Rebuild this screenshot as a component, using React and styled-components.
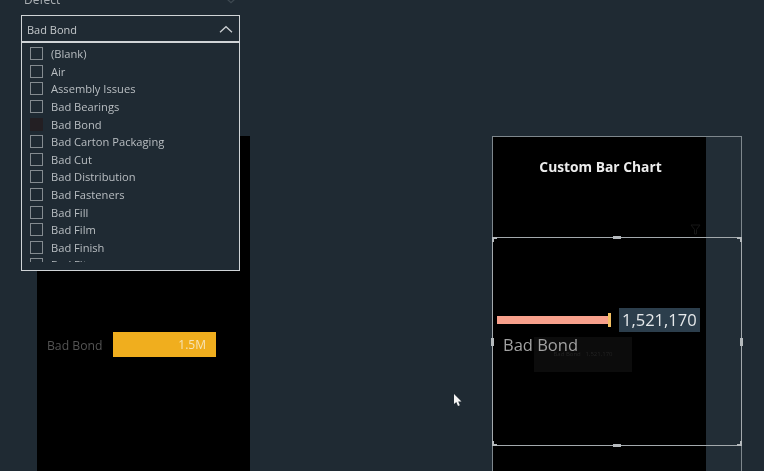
import React from "react";
import styled, { createGlobalStyle } from "styled-components";

const GlobalStyle = createGlobalStyle`
  html, body {
    margin: 0;
    padding: 0;
    background: #1f2a33;
    overflow: hidden;
  }
  body {
    font-family: "Open Sans", "Noto Sans", sans-serif;
  }
`;

const defects = [
  "(Blank)",
  "Air",
  "Assembly Issues",
  "Bad Bearings",
  "Bad Bond",
  "Bad Carton Packaging",
  "Bad Cut",
  "Bad Distribution",
  "Bad Fasteners",
  "Bad Fill",
  "Bad Film",
  "Bad Finish",
  "Bad Fit",
];

const Chevron = ({ up, color, size = 14 }) => (
  <svg width={size} height={size * 0.6} viewBox="0 0 14 8" fill="none">
    <path
      d={up ? "M1 7 L7 1.5 L13 7" : "M1 1 L7 6.5 L13 1"}
      stroke={color}
      strokeWidth="1.3"
    />
  </svg>
);

const Handle = ({ place }) => <SelectionHandle $place={place} />;

const App = () => {
  return (
    <Page>
      <GlobalStyle />
      <SlicerTitle>
        <span>Defect</span>
        <Chevron color="#3d4850" />
      </SlicerTitle>

      <Canvas>
        <LeftPanel>
          <BarRow>
            <BarLabel>Bad Bond</BarLabel>
            <Bar>1.5M</Bar>
          </BarRow>
        </LeftPanel>

        <RightPanel>
          <ChartArea>
            <ChartTitle>Custom Bar Chart</ChartTitle>
            <CustomChart>
              <BarLine>
                <Salmon />
                <EndMark />
                <ValueTag>1,521,170</ValueTag>
              </BarLine>
              <ChartLabel>Bad Bond</ChartLabel>
            </CustomChart>
          </ChartArea>
          <SideStrip />

          <GhostTip>Bad Bond &nbsp; 1,521,170</GhostTip>
          <FilterMark>
            <svg width="11" height="11" viewBox="0 0 11 11" fill="none">
              <path d="M1 1 H10 L6.5 5.5 V10 H4.5 V5.5 Z" stroke="#171717" />
            </svg>
          </FilterMark>
          <SelectionBox>
            {["tl", "tc", "tr", "ml", "mr", "bl", "bc", "br"].map((p) => (
              <Handle key={p} place={p} />
            ))}
          </SelectionBox>
        </RightPanel>
      </Canvas>

      <Dropdown>
        <DropdownHead>
          <span>Bad Bond</span>
          <Chevron up color="#c9cdd0" />
        </DropdownHead>
        <DropdownList>
          {defects.map((d) => (
            <Item key={d}>
              <CheckBox $selected={d === "Bad Bond"} />
              {d}
            </Item>
          ))}
        </DropdownList>
      </Dropdown>

      <Cursor>
        <svg width="10" height="14" viewBox="0 0 10 14">
          <path
            d="M1 1 V11 L3.3 9 L5 13 L6.8 12.2 L5.2 8.6 L8.5 8.4 Z"
            fill="#f4f4f4"
          />
        </svg>
      </Cursor>
    </Page>
  );
};

export default App;

const Page = styled.div`
  position: relative;
  width: 764px;
  height: 471px;
  overflow: hidden;
  background: #1f2a33;
  filter: blur(0.4px);
`;

const SlicerTitle = styled.div`
  position: absolute;
  top: -8px;
  left: 24px;
  width: 214px;
  display: flex;
  justify-content: space-between;
  align-items: center;
  font-size: 12px;
  line-height: 16px;
  color: #a9aeb2;
`;

const Canvas = styled.div`
  display: flex;
  align-items: flex-start;
  padding: 136px 0 0 37px;
  gap: 242px;
`;

const LeftPanel = styled.div`
  width: 213px;
  height: 335px;
  background: #000;
  box-sizing: border-box;
  padding: 196px 34px 0 10px;
`;

const BarRow = styled.div`
  display: flex;
  align-items: flex-start;
  gap: 11px;
`;

const BarLabel = styled.div`
  font-size: 12.2px;
  line-height: 27px;
  color: #545454;
  white-space: nowrap;
`;

const Bar = styled.div`
  flex: 1;
  height: 25px;
  background: #f0ae1e;
  color: #f6e3b5;
  font-size: 12px;
  line-height: 25px;
  text-align: right;
  padding-right: 10px;
`;

const RightPanel = styled.div`
  position: relative;
  display: flex;
  width: 250px;
  height: 335px;
  box-sizing: border-box;
  border: 1px solid #7e878d;
  border-bottom: 0;
`;

const ChartArea = styled.div`
  width: 213px;
  background: #000;
`;

const SideStrip = styled.div`
  flex: 1;
  background: #222d36;
`;

const ChartTitle = styled.div`
  height: 100px;
  padding: 20px 0 0 2px;
  box-sizing: border-box;
  font-size: 13.8px;
  line-height: 20px;
  font-weight: 700;
  color: #ececec;
  text-align: center;
`;

const CustomChart = styled.div`
  padding: 71px 0 0 4px;
`;

const BarLine = styled.div`
  display: flex;
  align-items: center;
`;

const Salmon = styled.div`
  width: 112px;
  height: 8px;
  background: #f8a08c;
`;

const EndMark = styled.div`
  width: 3px;
  height: 14px;
  margin-left: -1px;
  background: #f3c063;
`;

const ValueTag = styled.div`
  margin-left: 8px;
  padding: 0 3px;
  height: 24px;
  line-height: 24px;
  background: #2c3e4c;
  color: #e6e9eb;
  font-size: 16.5px;
  white-space: nowrap;
`;

const ChartLabel = styled.div`
  position: relative;
  z-index: 1;
  margin: 1px 0 0 6px;
  font-size: 16.5px;
  line-height: 24px;
  color: #a2a2a2;
`;

const GhostTip = styled.div`
  position: absolute;
  left: 41px;
  top: 200px;
  width: 98px;
  height: 35px;
  background: #0c0c0c;
  color: #242424;
  font-size: 6px;
  line-height: 35px;
  text-align: center;
  white-space: nowrap;
`;

const FilterMark = styled.div`
  position: absolute;
  left: 197px;
  top: 87px;
  line-height: 0;
`;

const SelectionBox = styled.div`
  position: absolute;
  left: -1px;
  right: -1px;
  top: 100px;
  height: 209px;
  box-sizing: border-box;
  border: 1px solid #a3a9ad;
`;

const handleSpots = {
  tl: "left: -1px; top: -1px; width: 5px; height: 5px; border-top: 2px solid #b5babd; border-left: 2px solid #b5babd;",
  tc: "left: 120px; top: -2px; width: 8px; height: 3px; background: #b5babd;",
  tr: "right: -1px; top: -1px; width: 5px; height: 5px; border-top: 2px solid #b5babd; border-right: 2px solid #b5babd;",
  ml: "left: -2px; top: 100px; width: 3px; height: 8px; background: #b5babd;",
  mr: "right: -2px; top: 100px; width: 3px; height: 8px; background: #b5babd;",
  bl: "left: -1px; bottom: -1px; width: 5px; height: 5px; border-bottom: 2px solid #b5babd; border-left: 2px solid #b5babd;",
  bc: "left: 120px; bottom: -2px; width: 8px; height: 3px; background: #b5babd;",
  br: "right: -1px; bottom: -1px; width: 5px; height: 5px; border-bottom: 2px solid #b5babd; border-right: 2px solid #b5babd;",
};

const SelectionHandle = styled.div`
  position: absolute;
  box-sizing: border-box;
  ${(p) => handleSpots[p.$place]}
`;

const Dropdown = styled.div`
  position: absolute;
  left: 21px;
  top: 15px;
  width: 219px;
  height: 256px;
  display: flex;
  flex-direction: column;
  box-sizing: border-box;
  background: #1f2a33;
  border: 1px solid #d0d4d7;
`;

const DropdownHead = styled.div`
  flex: none;
  height: 27px;
  box-sizing: border-box;
  padding: 1px 6px 0 5px;
  display: flex;
  justify-content: space-between;
  align-items: center;
  border-bottom: 2px solid #d0d4d7;
  font-size: 11px;
  color: #c4c8cb;
`;

const DropdownList = styled.div`
  flex: 1;
  overflow: hidden;
  padding: 2px 0 0 8px;
  margin-bottom: 8px;
`;

const Item = styled.div`
  display: flex;
  align-items: center;
  gap: 9px;
  height: 17.6px;
  font-size: 11.15px;
  color: #b9bec2;
  white-space: nowrap;
`;

const CheckBox = styled.div`
  width: 13px;
  height: 13px;
  box-sizing: border-box;
  border: 1px solid ${(p) => (p.$selected ? "#231f23" : "#848b90")};
  background: ${(p) => (p.$selected ? "#231f23" : "transparent")};
  margin-right: -1px;
`;

const Cursor = styled.div`
  position: absolute;
  left: 453px;
  top: 393px;
  line-height: 0;
`;
